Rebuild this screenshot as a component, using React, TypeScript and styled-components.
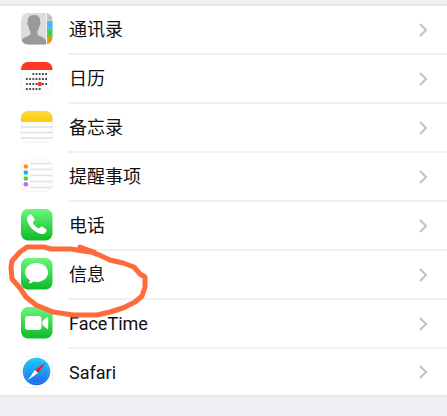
import React from "react";
import styled, { createGlobalStyle } from "styled-components";

const GlobalStyle = createGlobalStyle`
  body {
    margin: 0;
    background: #efeff4;
    color: #111;
    font-family: Roboto, "Noto Sans CJK SC", sans-serif;
  }
`;

const Page = styled.main`
  padding: 4px 0 20px;
`;

const SettingsList = styled.ul`
  position: relative;
  margin: 0;
  padding: 0;
  list-style: none;
  background: #fff;
  border-top: 2px solid #e8e8ec;
  border-bottom: 2px solid #e8e8ec;
`;

const Item = styled.li`
  &:last-child > button > span {
    border-bottom: 0;
  }
`;

const RowButton = styled.button`
  display: flex;
  align-items: stretch;
  width: 100%;
  height: 49px;
  padding: 0 0 0 20px;
  border: 0;
  background: none;
  color: inherit;
  font: inherit;
  text-align: left;
  cursor: pointer;

  ${Item}:last-child & {
    height: 46px;
  }
`;

const AppIcon = styled.svg`
  flex: none;
  width: 33px;
  height: 33px;
  margin-top: 6px;
`;

const RowBody = styled.span`
  display: flex;
  flex: 1;
  align-items: center;
  justify-content: space-between;
  margin-left: 15px;
  padding-right: 19px;
  border-bottom: 2px solid #f0f0f1;
`;

const Label = styled.span`
  font-size: 18px;
  line-height: 24px;
  padding-top: 1px;
  padding-left: 1px;
`;

const Chevron = styled.svg`
  width: 10px;
  height: 16px;
`;

const Marker = styled.svg`
  position: absolute;
  top: 236px;
  left: 8px;
  width: 142px;
  height: 84px;
  pointer-events: none;
`;

const Tile = ({ fill = "#fefefe" }: { fill?: string }) => (
  <rect x="1" y="1" width="31.500" height="31.500" rx="7" fill={fill} stroke={fill === "#fefefe" ? "#f3f3f3" : "none"} />
);

const Green = ({ id }: { id: string }) => (
  <>
    <defs>
      <linearGradient id={id} x1="0" y1="0" x2="0" y2="1">
        <stop offset="0" stopColor="#6af67c" />
        <stop offset="1" stopColor="#0dbb27" />
      </linearGradient>
    </defs>
    <Tile fill={`url(#${id})`} />
  </>
);

const ContactsIcon = () => (
  <>
    <defs>
      <clipPath id="contacts-tile"><rect x="1" y="1" width="31.500" height="31.500" rx="7" /></clipPath>
    </defs>
    <g clipPath="url(#contacts-tile)">
      <rect width="33" height="33" fill="#dededd" />
      <path d="M14 3c-5 0-6.500 3-6.300 7-.9.500-.5 3 .7 4 .3 2.500 1 4 2 5v3c0 2-8 3-9 7v4h25v-4c-1-4-9-5-9-7v-3c1-1 1.700-2.500 2-5 1.200-1 1.600-3.500.7-4C20.500 6 19 3 14 3z" fill="#999" />
      <rect x="26" width="1" height="33" fill="#f4f4f4" />
      <rect x="27" width="6" height="9" fill="#c9c9c9" />
      <rect x="27" y="9" width="6" height="8" fill="#45bdf5" />
      <rect x="27" y="17" width="6" height="8" fill="#50cf4e" />
      <rect x="27" y="25" width="6" height="8" fill="#ff9413" />
      <path d="M29 5.500h2M29 13h2M29 21h2M29 28h2" stroke="#64746b" strokeOpacity=".6" />
    </g>
  </>
);

const CalendarIcon = () => (
  <>
    <Tile />
    <path d="M1 9V8a7 7 0 0 1 7-7h17.500a7 7 0 0 1 7 7v1z" fill="#ff3528" />
    <g stroke="#4a4a4a" strokeWidth="1.800" strokeDasharray="1.800 1.400">
      <path d="M12.400 13H28M6 18h22M6 23h22M6 28h15" />
    </g>
    <circle cx="19.800" cy="23" r="2.200" fill="#ff3024" />
  </>
);

const NotesIcon = () => (
  <>
    <defs>
      <linearGradient id="notes-head" x1="0" y1="0" x2="0" y2="1">
        <stop offset="0" stopColor="#ffdc3f" />
        <stop offset="1" stopColor="#fec90a" />
      </linearGradient>
    </defs>
    <Tile />
    <path d="M1 11V8a7 7 0 0 1 7-7h17.500a7 7 0 0 1 7 7v3z" fill="url(#notes-head)" />
    <path d="M1 11.500h31.500" stroke="#d8c88c" />
    <path d="M1 17h31.500M1 22.500h31.500M1 28h31.500" stroke="#e0e0e0" strokeWidth="1.500" />
  </>
);

const RemindersIcon = () => (
  <>
    <Tile />
    <path d="M10 4.500h22M10 10.500h22M10 16.500h22M10 22.500h22M10 28.500h22" stroke="#e3e3e3" strokeWidth="1.500" />
    <circle cx="5.800" cy="7.500" r="2.300" fill="#ff9500" />
    <circle cx="5.800" cy="13.500" r="2.300" fill="#1badf8" />
    <circle cx="5.800" cy="19.500" r="2.300" fill="#53d726" />
    <circle cx="5.800" cy="25.300" r="2.300" fill="#c965e5" />
  </>
);

const PhoneIcon = () => (
  <>
    <Green id="phone-green" />
    <path d="M9 7c1.200-1 2.400-.9 3.300.4l1.900 2.800c.7 1.200.5 2-.4 2.800-1 .8-1.200 1.200-.6 2.200 1.200 2 2.700 3.500 4.700 4.700 1 .6 1.500.4 2.300-.6.800-1 1.700-1.100 2.700-.4l2.800 2c1.200.9 1.200 1.900.3 3-1.400 1.900-3.400 2.700-5.800 1.900-6-2-10.900-7-12.800-12.600C6.600 10.600 7 8.400 9 7z" fill="#fff" />
  </>
);

const MessagesIcon = () => (
  <>
    <Green id="messages-green" />
    <path d="M16.500 6C10 6 5 10 5 15.500c0 3.300 2 6.200 5 7.800-.1 1.400-.8 2.400-1.700 3.200 2 0 3.800-.8 5.100-2 1 .3 2 .4 3.100.4C23 24.900 28 21 28 15.500S23 6 16.500 6z" fill="#fff" />
  </>
);

const FaceTimeIcon = () => (
  <>
    <Green id="facetime-green" />
    <rect x="5" y="10" width="16.500" height="14" rx="3" fill="#fff" />
    <path d="M22.500 15l4.300-3.700c.7-.6 1.400-.3 1.400.6v10.200c0 .9-.7 1.200-1.400.6L22.500 19z" fill="#fff" />
  </>
);

const SafariIcon = () => (
  <>
    <defs>
      <linearGradient id="safari-dial" x1="0" y1="0" x2="0" y2="1">
        <stop offset="0" stopColor="#1dcbfb" />
        <stop offset="1" stopColor="#1d67ee" />
      </linearGradient>
    </defs>
    <Tile />
    <circle cx="16.500" cy="16.500" r="13.700" fill="url(#safari-dial)" />
    <circle cx="16.500" cy="16.500" r="11.800" fill="none" stroke="#c9edff" strokeWidth="1" strokeDasharray=".5 1.200" opacity=".45" />
    <path d="M25.500 7.500L15 15l3 3z" fill="#f01d20" />
    <path d="M7.500 25.500L15 15l3 3z" fill="#fff" />
  </>
);

const apps: { name: string; icon: React.ReactNode }[] = [
  { name: "通讯录", icon: <ContactsIcon /> },
  { name: "日历", icon: <CalendarIcon /> },
  { name: "备忘录", icon: <NotesIcon /> },
  { name: "提醒事项", icon: <RemindersIcon /> },
  { name: "电话", icon: <PhoneIcon /> },
  { name: "信息", icon: <MessagesIcon /> },
  { name: "FaceTime", icon: <FaceTimeIcon /> },
  { name: "Safari", icon: <SafariIcon /> },
];

export default function App() {
  return (
    <Page>
      <GlobalStyle />
      <SettingsList>
        {apps.map((app) => (
          <Item key={app.name}>
            <RowButton type="button">
              <AppIcon viewBox="0 0 33 33" aria-hidden="true">{app.icon}</AppIcon>
              <RowBody>
                <Label>{app.name}</Label>
                <Chevron viewBox="0 0 10 16" aria-hidden="true">
                  <path d="M2 2l6 6-6 6" fill="none" stroke="#c1c1c6" strokeWidth="2" />
                </Chevron>
              </RowBody>
            </RowButton>
          </Item>
        ))}
      </SettingsList>
      <Marker viewBox="0 0 142 84" aria-hidden="true">
        <path
          d="M72 11L80 14 86 16 88 18M88 18L83 16 75 15 63 13 43 13 36 11 19 11 12 16 4 25 3 31 4 43 12 52 18 61 28 69 45 76 65 79 89 79 102 76 115 72 127 66 134 60 137 51 137 41 132 38 126 31 115 27 102 24 89 18z"
          fill="none"
          stroke="#ff6a3c"
          strokeWidth="5"
          strokeLinecap="round"
          strokeLinejoin="round"
        />
      </Marker>
    </Page>
  );
}
